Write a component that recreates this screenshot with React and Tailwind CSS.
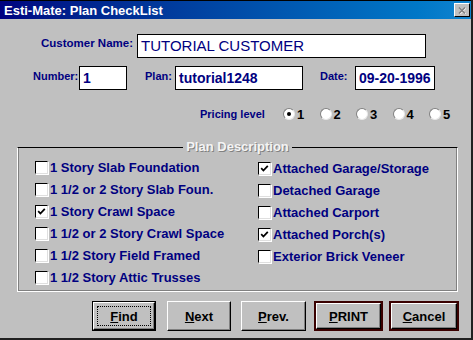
import React from "react";

const font = { fontFamily: '"Liberation Sans", Arial, sans-serif' };

const leftItems = [
  { label: "1 Story Slab Foundation", checked: false },
  { label: "1 1/2 or 2 Story Slab Foun.", checked: false },
  { label: "1 Story Crawl Space", checked: true },
  { label: "1 1/2 or 2 Story Crawl Space", checked: false },
  { label: "1 1/2 Story Field Framed", checked: false },
  { label: "1 1/2 Story Attic Trusses", checked: false },
];

const rightItems = [
  { label: "Attached Garage/Storage", checked: true },
  { label: "Detached Garage", checked: false },
  { label: "Attached Carport", checked: false },
  { label: "Attached Porch(s)", checked: true },
  { label: "Exterior Brick Veneer", checked: false },
];

const CheckBox = ({ checked }) => (
  <div className="w-[13px] h-[13px] bg-white border border-t-black border-l-black border-r-[#dfdfdf] border-b-[#dfdfdf] shadow-[1px_1px_0_#ffffff] flex items-center justify-center shrink-0">
    {checked && (
      <svg width="9" height="9" viewBox="0 0 9 9">
        <path d="M1.2 4.2 L3.4 6.5 L7.8 1.8" stroke="#000" strokeWidth="1.8" fill="none" />
      </svg>
    )}
  </div>
);

const CheckRow = ({ label, checked }) => (
  <div className="flex items-center h-[22px] gap-[2px]">
    <CheckBox checked={checked} />
    <span className="text-[13px] font-bold text-[#000080] leading-none">{label}</span>
  </div>
);

const Radio = ({ n, selected }) => (
  <div className="flex items-center w-[36.5px] gap-[2px]">
    <div className="w-[12px] h-[12px] rounded-full bg-white border border-t-[#808080] border-l-[#808080] border-r-[#e8e8e8] border-b-[#e8e8e8] flex items-center justify-center">
      {selected && <div className="w-[4px] h-[4px] rounded-full bg-black" />}
    </div>
    <span className="text-[13px] font-bold text-black leading-none">{n}</span>
  </div>
);

const Field = ({ className, children }) => (
  <div className={`h-[24px] bg-white border border-black flex items-center pl-[3px] text-[#000080] ${className}`}>
    {children}
  </div>
);

const Button = ({ k, rest, variant, className }) => {
  const outer =
    variant === "focus"
      ? "border border-black"
      : variant === "default"
      ? "border-2 border-[#3a0000]"
      : "";
  return (
    <div className={`h-[30px] ${outer} ${className}`}>
      <div className="w-full h-full bg-[#c0c0c0] border border-t-white border-l-white border-r-black border-b-black shadow-[inset_-1px_-1px_0_#808080] flex items-center justify-center">
        <div
          className={`flex items-center justify-center ${
            variant === "focus" ? "border border-dotted border-black w-[calc(100%-6px)] h-[calc(100%-6px)]" : ""
          }`}
        >
          <span className="text-[13px] font-bold text-black leading-none">
            <span className="underline">{k}</span>
            {rest}
          </span>
        </div>
      </div>
    </div>
  );
};

export default function App() {
  return (
    <div className="w-[473px] h-[340px] bg-[#c0c0c0] flex flex-col border-r-2 border-b-2 border-[#202020] overflow-hidden" style={font}>
      {/* Title bar */}
      <div className="h-[19px] shrink-0 border-t border-black bg-gradient-to-r from-[#000080] to-[#1084d0] flex items-center justify-between pl-[4px] pr-[1px]">
        <span className="text-white text-[13px] font-bold leading-none">Esti-Mate: Plan CheckList</span>
        <div className="w-[16px] h-[14px] bg-[#c0c0c0] border border-t-white border-l-white border-r-black border-b-black flex items-center justify-center">
          <svg width="8" height="7" viewBox="0 0 8 7">
            <path d="M1 0.5 L7 6.5 M7 0.5 L1 6.5" stroke="#ffffff" strokeWidth="1.6" transform="translate(0.6 0.6)" />
            <path d="M1 0.5 L7 6.5 M7 0.5 L1 6.5" stroke="#808080" strokeWidth="1.6" />
          </svg>
        </div>
      </div>

      {/* Customer name */}
      <div className="flex items-center mt-[15px]">
        <div className="w-[133px] text-right text-[11.5px] font-bold text-[#000080] -mt-[5px]">Customer Name:</div>
        <Field className="ml-[4px] w-[289px] text-[15px]">TUTORIAL CUSTOMER</Field>
      </div>

      {/* Number / Plan / Date */}
      <div className="flex items-center mt-[8px]">
        <div className="ml-[33px] w-[46px] text-[11px] font-bold text-[#000080] -mt-[3px]">Number:</div>
        <Field className="w-[48px] text-[14px] font-bold">1</Field>
        <div className="ml-[18px] w-[30px] text-[11px] font-bold text-[#000080] -mt-[3px]">Plan:</div>
        <Field className="w-[128px] text-[14px] font-bold">tutorial1248</Field>
        <div className="ml-[17px] w-[35px] text-[11px] font-bold text-[#000080] -mt-[3px]">Date:</div>
        <Field className="w-[80px] text-[14px] font-bold">09-20-1996</Field>
      </div>

      {/* Pricing level */}
      <div className="flex items-center mt-[17px] h-[14px]">
        <div className="ml-[200px] w-[83px] text-[11px] font-bold text-[#000080]">Pricing level</div>
        {[1, 2, 3, 4, 5].map((n) => (
          <Radio key={n} n={n} selected={n === 1} />
        ))}
      </div>

      {/* Plan Description group */}
      <div className="relative ml-[17px] mt-[26px] w-[441px] h-[145px] border border-t-black border-l-white border-r-white border-b-white shadow-[inset_1px_0_0_#808080,inset_-1px_-1px_0_#808080]">
        <div className="absolute -top-[8px] left-0 right-0 flex justify-center">
          <span className="bg-[#c0c0c0] px-[3px] text-[13px] font-bold leading-[14px] text-[#f4f4f4] [text-shadow:1px_1px_0_#808080]">
            Plan Description
          </span>
        </div>
        <div className="grid grid-cols-[223px_1fr] pt-[8px] pl-[17px]">
          <div className="flex flex-col">
            {leftItems.map((it) => (
              <CheckRow key={it.label} {...it} />
            ))}
          </div>
          <div className="flex flex-col pt-[1px]">
            {rightItems.map((it) => (
              <CheckRow key={it.label} {...it} />
            ))}
          </div>
        </div>
      </div>

      {/* Buttons */}
      <div className="flex items-center mt-[9px]">
        <Button k="F" rest="ind" variant="focus" className="ml-[92px] w-[64px]" />
        <Button k="N" rest="ext" className="ml-[11px] w-[64px]" />
        <Button k="P" rest="rev." className="ml-[10px] w-[65px]" />
        <Button k="P" rest="RINT" variant="default" className="ml-[8px] w-[69px]" />
        <Button k="C" rest="ancel" variant="default" className="ml-[6px] w-[70px]" />
      </div>
    </div>
  );
}
